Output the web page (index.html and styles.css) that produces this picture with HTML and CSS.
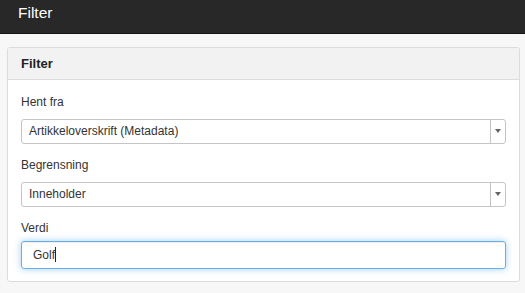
FILE: index.html
```html
<!DOCTYPE html>
<html lang="no">
<head>
  <meta charset="UTF-8" />
  <meta name="viewport" content="width=device-width, initial-scale=1.0"/>
  <title>Filter</title>
  <link rel="stylesheet" href="styles.css">
</head>
<body>

  <header class="topbar">Filter</header>

  <main class="page">
    <section class="panel">
      <div class="panel-heading">Filter</div>
      <div class="panel-body">
        <label class="field-label">Hent fra</label>
        <div class="select">
          <span class="select-value">Artikkeloverskrift (Metadata)</span>
          <span class="select-arrow"></span>
        </div>

        <label class="field-label">Begrensning</label>
        <div class="select">
          <span class="select-value">Inneholder</span>
          <span class="select-arrow"></span>
        </div>

        <label class="field-label">Verdi</label>
        <div class="text-input focused">Golf<span class="caret"></span></div>
      </div>
    </section>
  </main>

</body>
</html>
```

FILE: styles.css
```css
body {
  font-family: 'Liberation Sans', Arial, sans-serif;
  background-color: #f7f7f7;
  margin: 0;
  padding: 0;
  color: #333;
}

.topbar {
  height: 29px;
  padding: 4px 0 0 18px;
  line-height: 18px;
  font-size: 15.5px;
  color: #fff;
  background-color: #282828;
  border-bottom: 1px solid #151515;
}

.page {
  padding: 13px 5px 0 7px;
}

.panel {
  background: white;
  border: 1px solid #dcdcdc;
  border-radius: 3px;
}

.panel-heading {
  height: 31px;
  line-height: 31px;
  padding-left: 13px;
  font-size: 13px;
  font-weight: 700;
  color: #222;
  background-color: #f2f2f2;
  border-bottom: 1px solid #dcdcdc;
  border-radius: 3px 3px 0 0;
}

.panel-body {
  display: flex;
  flex-direction: column;
  padding: 14px 13px 12px 13px;
}

.field-label {
  display: block;
  font-size: 12px;
  line-height: 17px;
  color: #333;
  margin-bottom: 8px;
}

.select + .field-label {
  margin-top: 13px;
}

.select {
  display: flex;
  height: 23px;
  border: 1px solid #c4c4c4;
  border-radius: 3px;
  background: white;
  font-size: 12px;
  line-height: 23px;
}

.select-value {
  flex: 1;
  padding-left: 7px;
  color: #333;
}

.select-arrow {
  width: 14px;
  border-left: 1px solid #c4c4c4;
  display: flex;
  align-items: center;
  justify-content: center;
}

.select-arrow::after {
  content: '';
  border-left: 3px solid transparent;
  border-right: 3px solid transparent;
  border-top: 4px solid #666;
  margin-top: -2px;
}

.field-label:has(+ .text-input) {
  margin-bottom: 4px;
}

.text-input {
  height: 26px;
  line-height: 26px;
  padding-left: 11px;
  font-size: 12px;
  color: #333;
  border: 1px solid #c4c4c4;
  border-radius: 3px;
}

.text-input.focused {
  border-color: #66afe9;
  box-shadow: inset 0 1px 1px rgba(0,0,0,0.075), 0 0 7px rgba(102,175,233,0.6);
}

.caret {
  display: inline-block;
  width: 1px;
  height: 15px;
  background: #222;
  vertical-align: -3px;
}
```
